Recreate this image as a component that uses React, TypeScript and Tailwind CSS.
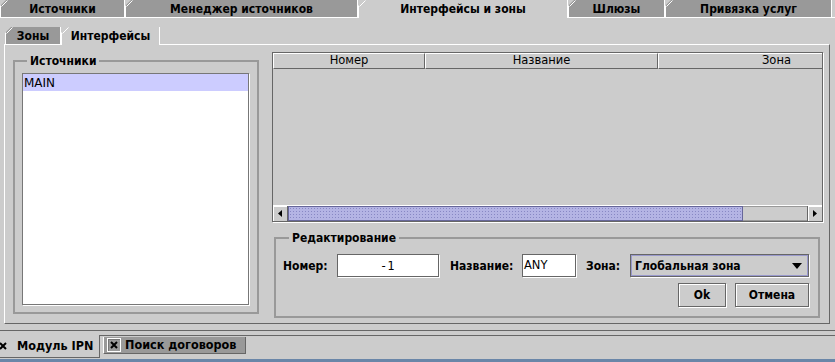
import React from "react";
import clsx from "clsx";

const topTabs = [
  { label: "Источники", w: "w-[125px]" },
  { label: "Менеджер источников", w: "w-[233px]" },
  { label: "Интерфейсы и зоны", w: "w-[210px]", active: true },
  { label: "Шлюзы", w: "w-[97px]" },
  { label: "Привязка услуг", w: "w-[167px]" },
];

const Slant = () => (
  <svg className="absolute left-0 top-0" width="7" height="7">
    <path d="M0.5 6.5 L6.5 0.5" stroke="#ffffff" strokeWidth="1" />
  </svg>
);

const Tab = ({ label, w, active }: { label: string; w: string; active?: boolean }) => (
  <div
    className={clsx(
      "relative flex items-center justify-center font-bold border-l border-white border-r border-[#666] [clip-path:polygon(6px_0,100%_0,100%_100%,0_100%,0_6px)]",
      w,
      active ? "h-[18px] -mb-px bg-[#cccccc] z-10" : "h-full bg-[#999999]"
    )}
  >
    <Slant />
    {label}
  </div>
);

const CloseBox = ({ boxed }: { boxed?: boolean }) => (
  <span
    className={clsx(
      "flex items-center justify-center shrink-0 w-[14px] h-[14px]",
      boxed && "border border-white shadow-[inset_1px_1px_0_#777]"
    )}
  >
    <svg width="8" height="8" viewBox="0 0 8 8">
      <path d="M1 1 L7 7 M7 1 L1 7" stroke="#000" strokeWidth="2" />
    </svg>
  </span>
);

const headCell =
  "shrink-0 flex items-center justify-center border-t border-l border-white border-r border-b border-r-[#666] border-b-[#666]";

export default function App() {
  return (
    <div className="w-[835px] h-[362px] overflow-hidden bg-[#cccccc] flex flex-col font-['DejaVu_Sans_Condensed','DejaVu_Sans',sans-serif] text-[12px] text-black leading-none">
      {/* Top tabs */}
      <div className="h-[17px] flex items-end">
        {topTabs.map((t) => (
          <Tab key={t.label} label={t.label} w={t.w} active={t.active} />
        ))}
      </div>

      {/* Main pane */}
      <div className="h-[314px] border-t border-white border-b border-b-[#666] pt-[8px] pl-[4px]">
        {/* Sub tabs */}
        <div className="h-[18px] flex items-end pl-[1px]">
          <div className="h-[17px]">
            <Tab label="Зоны" w="w-[56px]" />
          </div>
          <Tab label="Интерфейсы" w="w-[99px]" active />
        </div>

        {/* Sub tab pane */}
        <div className="w-[826px] h-[280px] border-t border-l border-white border-r border-b border-r-[#666] border-b-[#666] flex pl-[8px] pt-[7px]">
          {/* Sources group */}
          <fieldset className="mt-[2px] w-[246px] h-[260px] border-2 border-[#999999] pl-[7px] pr-[8px] pb-[7px] flex flex-col">
            <legend className="ml-[5px] px-[3px] font-bold leading-[14px]">Источники</legend>
            <div className="mt-[5px] flex-1 bg-white border border-[#777] shadow-[1px_1px_0_#fff]">
              <div className="h-[17px] bg-[#ccccff] flex items-center px-[1px] font-['DejaVu_Sans',sans-serif]">
                MAIN
              </div>
            </div>
          </fieldset>

          {/* Right column */}
          <div className="ml-[13px] w-[551px] flex flex-col">
            {/* Table scroll pane */}
            <div className="h-[170px] border border-[#666] shadow-[1px_1px_0_#fff] flex flex-col overflow-hidden">
              <div className="h-[16px] flex shrink-0 text-[11.5px] font-['DejaVu_Sans',sans-serif]">
                <div className={clsx(headCell, "w-[152px]")}>Номер</div>
                <div className={clsx(headCell, "w-[233px]")}>Название</div>
                <div className={clsx(headCell, "w-[237px]")}>Зона</div>
              </div>
              <div className="flex-1" />
              {/* Horizontal scrollbar */}
              <div className="h-[16px] shrink-0 flex border-t border-white">
                <div className="w-[15px] flex items-center justify-center border-r border-[#666] shadow-[inset_1px_1px_0_#fff]">
                  <svg width="4" height="7" viewBox="0 0 4 7">
                    <path d="M4 0 L0 3.5 L4 7 Z" fill="#000" />
                  </svg>
                </div>
                <div className="w-[455px] border border-[#666699] bg-[#b4b4e4] bg-[radial-gradient(circle,#8888c4_0.7px,transparent_0.9px)] bg-[length:3px_3px]" />
                <div className="flex-1 border-y border-[#999]" />
                <div className="w-[15px] flex items-center justify-center border-l border-[#666] shadow-[inset_1px_1px_0_#fff]">
                  <svg width="4" height="7" viewBox="0 0 4 7">
                    <path d="M0 0 L4 3.5 L0 7 Z" fill="#000" />
                  </svg>
                </div>
              </div>
            </div>

            {/* Edit group */}
            <fieldset className="mt-[9px] ml-[2px] w-[546px] h-[87px] border-2 border-[#999999] pl-[7px] pr-[9px]">
              <legend className="ml-[6px] px-[3px] font-bold leading-[14px]">Редактирование</legend>
              <div className="mt-[9px] flex items-center h-[23px] font-bold">
                <span className="w-[54px] shrink-0">Номер:</span>
                <div className="w-[102px] h-[23px] bg-white border border-[#666] shadow-[1px_1px_0_#fff] flex items-center pl-[42px] font-normal font-['DejaVu_Sans_Mono',monospace]">
                  -1
                </div>
                <span className="ml-[11px] w-[72px] shrink-0">Название:</span>
                <div className="w-[54px] h-[23px] bg-white border border-[#666] shadow-[1px_1px_0_#fff] flex items-center pl-[1px] font-normal text-[11.5px] font-['DejaVu_Sans',sans-serif]">
                  ANY
                </div>
                <span className="ml-[10px] w-[44px] shrink-0">Зона:</span>
                <div className="w-[179px] h-[23px] border border-[#666] shadow-[inset_0_0_0_1px_#9999cc,1px_1px_0_#fff] flex items-center pl-[4px] pr-[6px]">
                  <span className="flex-1">Глобальная зона</span>
                  <svg width="10" height="6" viewBox="0 0 10 6">
                    <path d="M0 0 L10 0 L5 6 Z" fill="#000" />
                  </svg>
                </div>
              </div>
              <div className="mt-[6px] flex justify-end gap-[9px] font-bold">
                <button className="w-[48px] h-[24px] border border-[#666] shadow-[inset_1px_1px_0_#fff,1px_1px_0_#fff] bg-[#cccccc]">
                  Ok
                </button>
                <button className="w-[74px] h-[24px] border border-[#666] shadow-[inset_1px_1px_0_#fff,1px_1px_0_#fff] bg-[#cccccc]">
                  Отмена
                </button>
              </div>
            </fieldset>
          </div>
        </div>
      </div>

      {/* Bottom tabs */}
      <div className="h-[4px]" />
      <div className="h-[24px] border-t border-[#666] flex items-start font-bold text-[12.5px] whitespace-nowrap">
        <div className="-mt-px -ml-[4px] w-[104px] h-[23px] bg-[#cccccc] border-r border-b border-[#666] flex items-center">
          <CloseBox />
          <span className="ml-[7px]">Модуль IPN</span>
        </div>
        <div className="ml-[3px] mt-px w-[143px] h-[17px] bg-[#999999] border-l border-white border-r border-b border-r-[#666] border-b-[#666] flex items-center pl-[3px]">
          <CloseBox boxed />
          <span className="ml-[4px]">Поиск договоров</span>
        </div>
      </div>
      <div className="flex-1 bg-[#6a86a8]" />
    </div>
  );
}
